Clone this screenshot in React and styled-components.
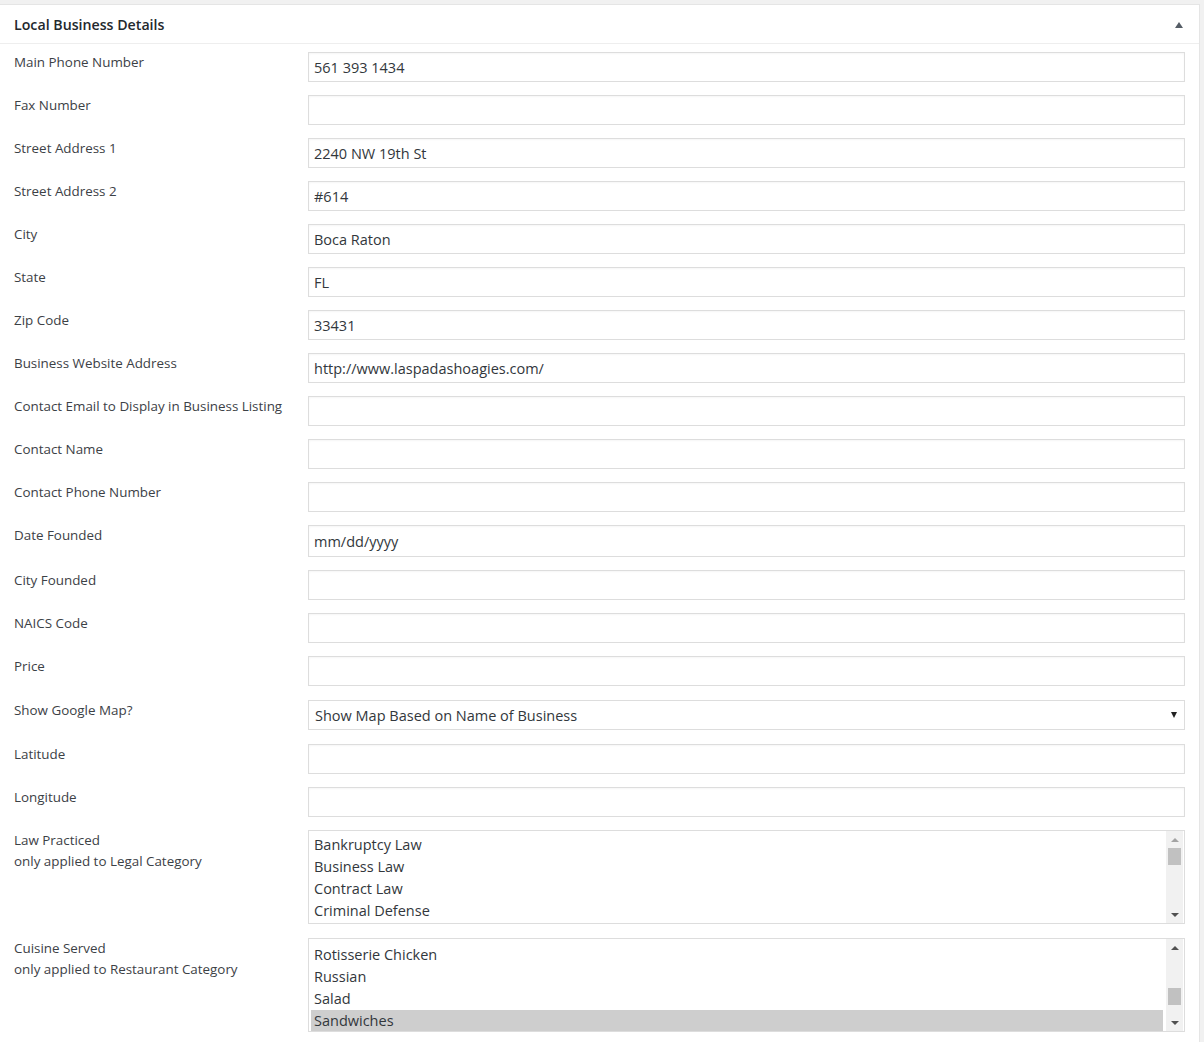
import React from "react";
import styled, { createGlobalStyle } from "styled-components";

const GlobalStyle = createGlobalStyle`
  html, body {
    margin: 0;
    padding: 0;
    background: #f1f1f1;
  }
  body {
    font-family: "Open Sans", "Noto Sans", sans-serif;
    color: #23282d;
  }
`;

const fields = [
  { label: "Main Phone Number", value: "561 393 1434" },
  { label: "Fax Number", value: "" },
  { label: "Street Address 1", value: "2240 NW 19th St" },
  { label: "Street Address 2", value: "#614" },
  { label: "City", value: "Boca Raton" },
  { label: "State", value: "FL" },
  { label: "Zip Code", value: "33431" },
  { label: "Business Website Address", value: "http://www.laspadashoagies.com/" },
  { label: "Contact Email to Display in Business Listing", value: "" },
  { label: "Contact Name", value: "" },
  { label: "Contact Phone Number", value: "" },
  { label: "Date Founded", value: "mm/dd/yyyy", tall: true },
  { label: "City Founded", value: "" },
  { label: "NAICS Code", value: "" },
  { label: "Price", value: "" },
];

const lawOptions = ["Bankruptcy Law", "Business Law", "Contract Law", "Criminal Defense"];
const cuisineOptions = ["Rotisserie Chicken", "Russian", "Salad", "Sandwiches"];

const App = () => {
  return (
    <>
      <GlobalStyle />
      <Panel>
        <Header>
          <Title>Local Business Details</Title>
          <Toggle />
        </Header>
        <Body>
          {fields.map((f) => (
            <Row key={f.label}>
              <Label>{f.label}</Label>
              <Input $tall={f.tall} readOnly value={f.value} />
            </Row>
          ))}
          <Row $extra>
            <Label>Show Google Map?</Label>
            <Select>
              <span>Show Map Based on Name of Business</span>
              <SelectArrow />
            </Select>
          </Row>
          <Row>
            <Label>Latitude</Label>
            <Input readOnly value="" />
          </Row>
          <Row>
            <Label>Longitude</Label>
            <Input readOnly value="" />
          </Row>
          <Row>
            <Label>
              Law Practiced
              <br />
              only applied to Legal Category
            </Label>
            <ListBox>
              <Options $offset={3}>
                {lawOptions.map((o) => (
                  <Option key={o}>{o}</Option>
                ))}
              </Options>
              <Scrollbar>
                <ArrowUp $light />
                <Track>
                  <Thumb style={{ marginTop: 1 }} />
                </Track>
                <ArrowDown />
              </Scrollbar>
            </ListBox>
          </Row>
          <Row $after>
            <Label>
              Cuisine Served
              <br />
              only applied to Restaurant Category
            </Label>
            <ListBox>
              <Options $offset={5}>
                {cuisineOptions.map((o) => (
                  <Option key={o} $selected={o === "Sandwiches"}>
                    {o}
                  </Option>
                ))}
              </Options>
              <Scrollbar>
                <ArrowUp />
                <Track>
                  <Thumb style={{ marginTop: 33 }} />
                </Track>
                <ArrowDown />
              </Scrollbar>
            </ListBox>
          </Row>
        </Body>
      </Panel>
    </>
  );
};

export default App;

const Panel = styled.div`
  margin-top: 4px;
  background: #fff;
  border: 1px solid #e5e5e5;
  border-left: none;
  box-sizing: border-box;
  width: 1200px;
`;

const Header = styled.div`
  height: 38px;
  border-bottom: 1px solid #eee;
  display: flex;
  align-items: center;
  justify-content: space-between;
  padding: 0 16px 0 14px;
`;

const Title = styled.h2`
  margin: 0;
  font-size: 14.2px;
  font-weight: 600;
  color: #23282d;
`;

const Toggle = styled.span`
  width: 0;
  height: 0;
  border-left: 4px solid transparent;
  border-right: 4px solid transparent;
  border-bottom: 6px solid #555d66;
  margin-top: 1px;
`;

const Body = styled.div`
  display: flex;
  flex-direction: column;
  gap: 13px;
  padding: 8px 0 10px 14px;
`;

const Row = styled.div`
  display: grid;
  grid-template-columns: 294px 877px;
  align-items: start;
  margin-top: ${(p) => (p.$extra ? "1px" : "0")};
  margin-bottom: ${(p) => (p.$extra ? "1px" : "0")};
  padding-top: ${(p) => (p.$after ? "1px" : "0")};
`;

const Label = styled.div`
  font-size: 13.4px;
  line-height: 21px;
  color: #3c4146;
  white-space: nowrap;
`;

const Input = styled.input`
  box-sizing: border-box;
  width: 877px;
  height: ${(p) => (p.$tall ? "32px" : "30px")};
  margin: 0;
  border: 1px solid #ddd;
  box-shadow: inset 0 1px 2px rgba(0, 0, 0, 0.04);
  padding: 0 5px;
  font-family: "Open Sans", "Noto Sans", sans-serif;
  font-size: 14.5px;
  color: #32373c;
  background: #fff;
  outline: none;
`;

const Select = styled.div`
  box-sizing: border-box;
  height: 30px;
  border: 1px solid #ddd;
  display: flex;
  align-items: center;
  justify-content: space-between;
  padding: 0 7px 0 6px;
  font-size: 14.5px;
  color: #32373c;
`;

const SelectArrow = styled.span`
  width: 0;
  height: 0;
  border-left: 3.5px solid transparent;
  border-right: 3.5px solid transparent;
  border-top: 6px solid #222;
`;

const ListBox = styled.div`
  box-sizing: border-box;
  height: 94px;
  border: 1px solid #ddd;
  display: flex;
  padding: 0 1px 0 2px;
  overflow: hidden;
`;

const Options = styled.div`
  flex: 1;
  padding-top: ${(p) => p.$offset}px;
  margin-right: 3px;
`;

const Option = styled.div`
  height: 22px;
  line-height: 22px;
  padding: 0 3px;
  font-size: 14.5px;
  color: #32373c;
  background: ${(p) => (p.$selected ? "#cecece" : "transparent")};
`;

const Scrollbar = styled.div`
  width: 17px;
  background: #f1f1f1;
  display: flex;
  flex-direction: column;
  align-items: center;
`;

const ArrowUp = styled.span`
  flex: none;
  margin: 7px 0 5px;
  width: 0;
  height: 0;
  border-left: 4px solid transparent;
  border-right: 4px solid transparent;
  border-bottom: 4px solid ${(p) => (p.$light ? "#a3a3a3" : "#505050")};
`;

const ArrowDown = styled.span`
  flex: none;
  margin: 5px 0 6px;
  width: 0;
  height: 0;
  border-left: 4px solid transparent;
  border-right: 4px solid transparent;
  border-top: 4px solid #505050;
`;

const Track = styled.div`
  flex: 1;
  width: 100%;
  display: flex;
  flex-direction: column;
  align-items: center;
`;

const Thumb = styled.div`
  width: 13px;
  height: 17px;
  background: #c1c1c1;
`;
